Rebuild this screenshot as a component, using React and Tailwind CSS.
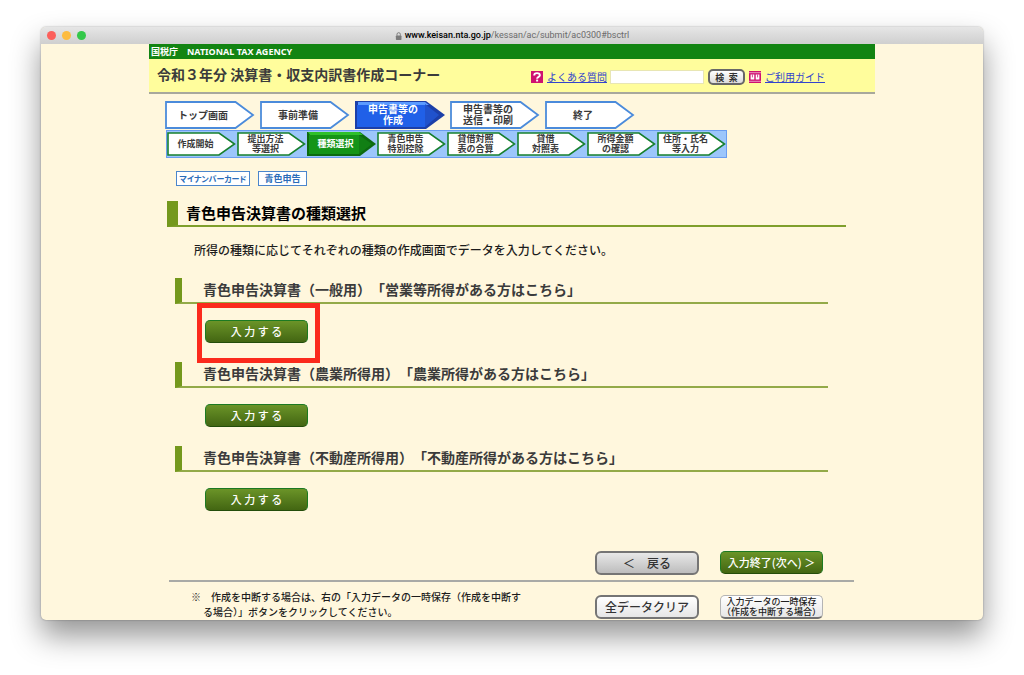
import React, { Fragment } from "react";
import clsx from "clsx";

const mainSteps = [
	{ lines: ["トップ画面"] },
	{ lines: ["事前準備"] },
	{ lines: ["申告書等の", "作成"], active: true },
	{ lines: ["申告書等の", "送信・印刷"] },
	{ lines: ["終了"] },
];

const subSteps = [
	{ lines: ["作成開始"] },
	{ lines: ["提出方法", "等選択"] },
	{ lines: ["種類選択"], active: true },
	{ lines: ["青色申告", "特別控除"] },
	{ lines: ["貸借対照", "表の合算"] },
	{ lines: ["貸借", "対照表"] },
	{ lines: ["所得金額", "の確認"] },
	{ lines: ["住所・氏名", "等入力"] },
];

const forms = [
	{ id: "general", title: "青色申告決算書（一般用）　「営業等所得がある方はこちら」", marked: true },
	{ id: "farm", title: "青色申告決算書（農業所得用）　「農業所得がある方はこちら」" },
	{ id: "estate", title: "青色申告決算書（不動産所得用）　「不動産所得がある方はこちら」" },
];

const StepLabel = ({ lines, active, className }) => (
	<span
		className={clsx(
			"[grid-area:1/1] self-center text-center font-bold whitespace-nowrap font-['Liberation_Sans','Noto_Sans_CJK_JP',sans-serif]",
			active ? "text-white" : "text-[#3a3a3a]",
			className
		)}
	>
		{lines.map((line, i) => (
			<Fragment key={line}>
				{i > 0 && <br />}
				{line}
			</Fragment>
		))}
	</span>
);

const MainStep = ({ lines, active }) => (
	<li className="grid w-[90px] h-7" aria-current={active ? "step" : undefined}>
		<svg viewBox="0 0 90 28" className="[grid-area:1/1] w-full h-full" aria-hidden="true">
			{active ? (
				<>
					<polygon points="0,0 71,0 90,14 71,28 0,28" fill="#1c3fa8" />
					<polygon points="3,1 70,1 74,4 3,4" fill="#5b9bff" />
					<polygon points="2,4 70,4 70,26 2,26" fill="#2060e8" />
					<polygon points="70,3 84,14 70,26" fill="#2052cc" />
				</>
			) : (
				<polygon points="1,1 70.5,1 88,14 70.5,27 1,27" fill="#fff" stroke="#4b8bdb" strokeWidth="1.8" />
			)}
		</svg>
		<StepLabel lines={lines} active={active} className="pr-3.5 text-[10px] leading-[11px]" />
	</li>
);

const SubStep = ({ lines, active }) => (
	<li className="grid w-[69px] h-6" aria-current={active ? "step" : undefined}>
		<svg viewBox="0 0 69 24" className="[grid-area:1/1] w-full h-full" aria-hidden="true">
			{active ? (
				<>
					<polygon points="0,0 53,0 69,12 53,24 0,24" fill="#0d6a10" />
					<polygon points="1,0 52,0 56,3 3,3" fill="#2fc02a" />
					<polygon points="2,3 52,3 52,22 2,22" fill="#159418" />
					<polygon points="52,3 65,12 52,22" fill="#117f14" />
				</>
			) : (
				<polygon points="1,1 52,1 67.5,12 52,23 1,23" fill="#fff" stroke="#17802f" strokeWidth="1.6" />
			)}
		</svg>
		<StepLabel lines={lines} active={active} className="pr-3 text-[9px] leading-[10px]" />
	</li>
);

const greenButton =
	"block w-[103px] h-[23px] rounded-[5px] border border-[#1c7a22] border-b-[#234d0a] bg-linear-to-b from-[#6b9428] to-[#436612] text-white text-[11px] leading-none font-medium whitespace-nowrap";

const TitleBar = () => (
	<div className="h-[17px] flex items-center justify-center relative bg-linear-to-b from-[#e6e6e6] to-[#cfcfcf]">
		<div className="absolute left-[6px] flex gap-[6px]">
			<span className="size-[9px] rounded-full bg-[#fc605b]" />
			<span className="size-[9px] rounded-full bg-[#fdbc40]" />
			<span className="size-[9px] rounded-full bg-[#34c84a]" />
		</div>
		<svg viewBox="0 0 8 9" className="w-[7px] h-2 mr-[3px]" aria-hidden="true">
			<rect x="1" y="4" width="6.4" height="5" rx="0.8" fill="#7b7b7b" />
			<path d="M2.3 4.2V2.6a1.9 1.9 0 0 1 3.8 0v1.6" fill="none" stroke="#7b7b7b" strokeWidth="1.1" />
		</svg>
		<span className="font-[Roboto,sans-serif] text-[9px] leading-none text-[#6b6b6b]">
			<span className="font-medium text-black">www.keisan.nta.go.jp</span>/kessan/ac/submit/ac0300#bsctrl
		</span>
	</div>
);

const SiteHeader = () => (
	<header>
		<div className="h-[15px] flex items-center gap-[9px] pl-[2px] bg-[#128412] text-white text-[9px] font-bold">
			<span>国税庁</span>
			<span className="font-['Noto_Sans',sans-serif]">NATIONAL TAX AGENCY</span>
		</div>
		<div className="h-[35px] flex items-center bg-[#fffd9c] border-b-2 border-[#a8a89c] pl-2 pr-[50px]">
			<h1 className="flex-1 pb-[3px] text-sm leading-none font-bold text-[#3b3b3b]">令和３年分 決算書・収支内訳書作成コーナー</h1>
			<form className="flex items-center text-[10px] leading-none pt-[3px]" onSubmit={(e) => e.preventDefault()}>
				<svg viewBox="0 0 12 12" className="size-3 mr-1" aria-hidden="true">
					<rect width="12" height="12" fill="#cf1270" />
					<path d="M3.2 4.4C3.2 1.4 8.9 1.4 8.9 4.2 8.9 5.9 6.1 5.8 6.1 7.8" fill="none" stroke="#fff" strokeWidth="1.9" />
					<rect x="5.1" y="8.6" width="2" height="1.9" fill="#fff" />
				</svg>
				<a href="#faq" className="text-[#3344cc] underline underline-offset-1">よくある質問</a>
				<input
					type="text"
					aria-label="検索キーワード"
					className="w-[94px] h-[14px] ml-[3px] mr-1 bg-white border border-[#e8e6b4] text-[10px]"
				/>
				<button
					type="submit"
					className="w-[37px] h-4 rounded-[5px] border-2 border-[#686868] bg-linear-to-b from-white to-[#dcdcdc] text-[9px] leading-none font-bold text-[#333] whitespace-nowrap mr-1"
				>
					検&ensp;索
				</button>
				<svg viewBox="0 0 12 12" className="size-3 mr-1" aria-hidden="true">
					<rect width="12" height="12" fill="#cf1270" />
					<path d="M0 1.7h12M0 10.3h12" stroke="#fff" strokeWidth="0.8" opacity="0.7" />
					<path d="M1.6 3.4h3.7v5.2H1.6zM6.7 3.4h3.7v5.2H6.7z" fill="#fff" />
					<path d="M3.4 3.4v3M8.6 3.4v3" stroke="#cf1270" strokeWidth="0.8" />
				</svg>
				<a href="#guide" className="text-[#3344cc] underline underline-offset-1">ご利用ガイド</a>
			</form>
		</div>
	</header>
);

const FormSection = ({ id, title, marked }) => (
	<section className="h-[84px]" aria-labelledby={id}>
		<h3
			id={id}
			className="h-[26px] flex items-center border-l-[7px] border-b-2 border-l-[#74981c] border-b-[#93aa48] pl-[21px] pb-[2px] text-sm leading-none font-bold text-[#3b3b3b]"
		>
			{title}
		</h3>
		<div className="relative mt-4 ml-[30px] w-[103px]">
			<button type="button" className={greenButton}>入 力 す る</button>
			{marked && (
				<div className="absolute -left-2 -right-3 -top-[17px] -bottom-5 border-[5px] border-[#fb2a1c] pointer-events-none" />
			)}
		</div>
	</section>
);

const App = () => {
	return (
		<div className="bg-white pt-[27px] px-[41px] pb-[55px] font-['Noto_Sans_CJK_JP',sans-serif]" lang="ja">
			<div className="rounded-[5px] overflow-hidden bg-[#fff7dd] shadow-[0_16px_30px_rgba(0,0,0,0.42),0_0_2px_rgba(0,0,0,0.35)]">
				<TitleBar />
				<div className="max-w-[726px] mx-auto">
					<SiteHeader />
					<main>
						<nav className="pt-[7px] pl-4" aria-label="作成の流れ">
							<ol className="flex gap-[5px]">
								{mainSteps.map((step, i) => (
									<MainStep key={i} {...step} />
								))}
							</ol>
							<ol className="flex gap-px w-fit ml-px mt-px border border-[#6a9df0] bg-[#9cc6fb] py-px">
								{subSteps.map((step, i) => (
									<SubStep key={i} {...step} />
								))}
							</ol>
						</nav>

						<div className="flex gap-2 pl-[27px] mt-[13px] leading-none font-bold text-[#2a6cb8]">
							<span className="w-[74px] h-[15px] flex items-center justify-center border border-[#4b86cc] bg-white text-[8px] whitespace-nowrap [font-feature-settings:'palt']">
								マイナンバーカード
							</span>
							<span className="w-[49px] h-[15px] flex items-center justify-center border border-[#4b86cc] bg-white text-[9px]">
								青色申告
							</span>
						</div>

						<h2 className="h-[26px] flex items-center mt-[15px] ml-[18px] mr-[29px] pl-2 pb-[2px] border-l-[11px] border-b-2 border-l-[#74981c] border-b-[#7f9f2c] text-[15px] leading-none font-bold text-black">
							青色申告決算書の種類選択
						</h2>
						<p className="mt-[15px] ml-[45px] text-xs leading-4 font-medium text-[#1c1c1c]">
							所得の種類に応じてそれぞれの種類の作成画面でデータを入力してください。
						</p>

						<div className="mt-5 ml-[26px] mr-[47px]">
							{forms.map((form) => (
								<FormSection key={form.id} {...form} />
							))}
						</div>

						<div className="flex justify-end gap-[21px] mt-[21px] mr-[52px]">
							<button
								type="button"
								className="w-[104px] h-6 rounded-[6px] border-2 border-[#757575] bg-linear-to-b from-[#e8e8e8] to-[#bdbdbd] text-xs leading-none font-medium text-[#333] whitespace-nowrap"
							>
								＜　戻る
							</button>
							<button type="button" className={greenButton}>入力終了(次へ) ＞</button>
						</div>

						<div className="flex justify-between mt-[5px] ml-5 mr-[21px] border-t-2 border-[#a9aaa6] pl-[22px] pr-[31px] pt-[7px] pb-px">
							<p className="text-[10px] leading-[15px] font-medium text-[#1c1c1c] whitespace-nowrap">
								※　作成を中断する場合は、右の「入力データの一時保存（作成を中断す
								<span className="block pl-3">る場合）」ボタンをクリックしてください。</span>
							</p>
							<div className="flex gap-[21px] pt-[6px] h-[30px]">
								<button
									type="button"
									className="w-[104px] h-6 rounded-[6px] border-2 border-[#757575] bg-linear-to-b from-white to-[#e6e6e6] text-xs leading-none font-medium text-[#333] whitespace-nowrap"
								>
									全データクリア
								</button>
								<button
									type="button"
									className="w-[103px] h-6 rounded-[5px] border border-[#b4b4b4] border-b-2 border-b-[#707070] bg-linear-to-b from-white to-[#e6e6e6] font-['Liberation_Sans','Noto_Sans_CJK_JP',sans-serif] text-[9px] leading-[10px] font-medium text-[#222] whitespace-nowrap"
								>
									入力データの一時保存
									<br />
									（作成を中断する場合）
								</button>
							</div>
						</div>
					</main>
				</div>
			</div>
		</div>
	);
};

export default App;
